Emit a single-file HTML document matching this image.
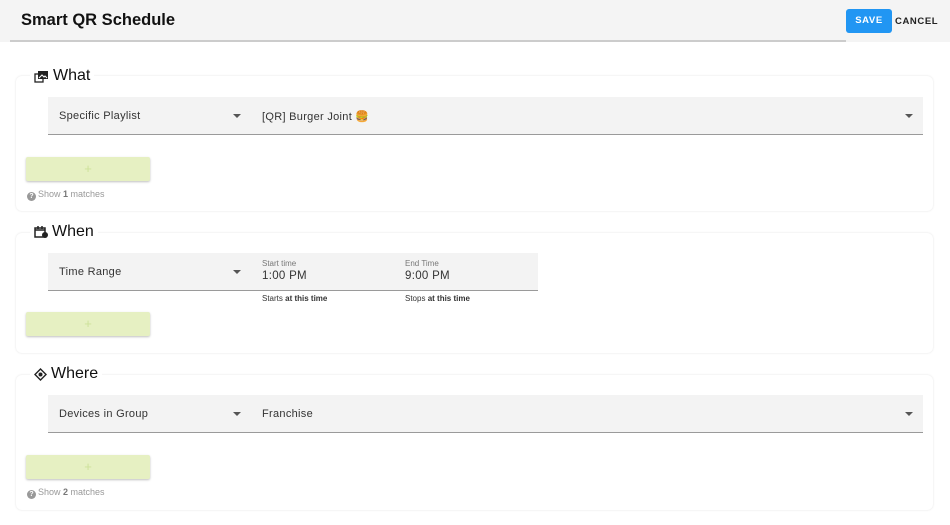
<!DOCTYPE html>
<html><head><meta charset="utf-8"><style>
*{box-sizing:border-box;margin:0;padding:0}
body{width:950px;height:525px;background:#fff;font-family:"Liberation Sans",sans-serif;position:relative;overflow:hidden;color:#222}
.a{position:absolute}
.hdr{left:0;top:0;width:950px;height:42px;background:#f4f4f4}
.line{left:10px;top:40px;width:836px;height:2px;background:#ccc}
.card{left:16px;width:917px;border-radius:6px;box-shadow:0 0 2px rgba(0,0,0,.12)}
.leg{left:30px;background:#fff;padding:0 4px;font-size:16px;color:#111;display:flex;align-items:center;gap:4px}
.fld{background:#f3f3f3;border-bottom:1px solid #9a9a9a}
.t{font-size:11px;color:#333;letter-spacing:.3px}
.arr{width:0;height:0;border-left:4px solid transparent;border-right:4px solid transparent;border-top:4px solid #555}
.btn{left:26px;width:124px;height:24px;background:#e6f0c2;border-radius:2px;box-shadow:0 1px 2px rgba(0,0,0,.25);color:#cde29a;text-align:center;font-size:13px;line-height:24px}
.sm{font-size:9px;color:#999}
.q{display:inline-block;width:9px;height:9px;border-radius:50%;background:#999;color:#fff;font-size:7px;text-align:center;line-height:9px;vertical-align:-1px;margin-right:2px;font-weight:bold}
</style></head><body>
<div class="a hdr"></div>
<div class="a line"></div>
<div class="a" style="left:21px;top:11px;font-size:16.5px;font-weight:bold;color:#111">Smart QR Schedule</div>
<div class="a" style="left:846px;top:9px;width:46px;height:24px;background:#2196f3;border-radius:3px;color:#fff;font-size:9.5px;font-weight:bold;text-align:center;line-height:24px;letter-spacing:.6px">SAVE</div>
<div class="a" style="left:895px;top:16px;font-size:9.5px;font-weight:bold;color:#222;letter-spacing:.6px">CANCEL</div>

<!-- What -->
<div class="a card" style="top:76px;height:135px"></div>
<div class="a leg" style="top:67px"><svg width="15" height="13" viewBox="0 0 15 13"><rect x="1" y="4" width="8" height="8" fill="none" stroke="#222" stroke-width="1.3"/><rect x="4" y="1" width="10" height="8" fill="#222"/><path d="M5 8l3-3 2 2 1-1 2 2" stroke="#fff" fill="none"/></svg>What</div>
<div class="a fld" style="left:48px;top:97px;width:875px;height:38px"></div>
<div class="a t" style="left:59px;top:110px">Specific Playlist</div>
<div class="a arr" style="left:233px;top:114px"></div>
<div class="a t" style="left:262px;top:110px">[QR] Burger Joint 🍔</div>
<div class="a arr" style="left:905px;top:114px"></div>
<div class="a btn" style="top:157px">+</div>
<div class="a sm" style="left:27px;top:189px"><span class="q">?</span>Show <b style="color:#777">1</b> matches</div>

<!-- When -->
<div class="a card" style="top:233px;height:120px"></div>
<div class="a leg" style="top:223px"><svg width="14" height="14" viewBox="0 0 14 14"><rect x="1" y="3" width="10" height="9" fill="none" stroke="#222" stroke-width="1.5"/><path d="M1 5h10M4 1v3M8 1v3" stroke="#222" stroke-width="1.5"/><circle cx="11" cy="10" r="3" fill="#222"/></svg>When</div>
<div class="a fld" style="left:48px;top:253px;width:490px;height:38px"></div>
<div class="a t" style="left:59px;top:266px">Time Range</div>
<div class="a arr" style="left:233px;top:270px"></div>
<div class="a" style="left:262px;top:259px;font-size:8px;color:#777">Start time</div>
<div class="a t" style="left:262px;top:270px;font-size:11.5px">1:00 PM</div>
<div class="a" style="left:405px;top:259px;font-size:8px;color:#777">End Time</div>
<div class="a t" style="left:405px;top:270px;font-size:11.5px">9:00 PM</div>
<div class="a" style="left:262px;top:294px;font-size:8px;color:#333">Starts <b>at this time</b></div>
<div class="a" style="left:405px;top:294px;font-size:8px;color:#333">Stops <b>at this time</b></div>
<div class="a btn" style="top:312px">+</div>

<!-- Where -->
<div class="a card" style="top:375px;height:135px"></div>
<div class="a leg" style="top:365px"><svg width="13" height="13" viewBox="0 0 13 13"><path d="M6.5 1L12 6.5 6.5 12 1 6.5z" fill="none" stroke="#222" stroke-width="1.4"/><circle cx="6.5" cy="6.5" r="2" fill="#222"/></svg>Where</div>
<div class="a fld" style="left:48px;top:395px;width:875px;height:38px"></div>
<div class="a t" style="left:59px;top:408px">Devices in Group</div>
<div class="a arr" style="left:233px;top:412px"></div>
<div class="a t" style="left:262px;top:408px">Franchise</div>
<div class="a arr" style="left:905px;top:412px"></div>
<div class="a btn" style="top:455px">+</div>
<div class="a sm" style="left:27px;top:487px"><span class="q">?</span>Show <b style="color:#777">2</b> matches</div>
</body></html>
